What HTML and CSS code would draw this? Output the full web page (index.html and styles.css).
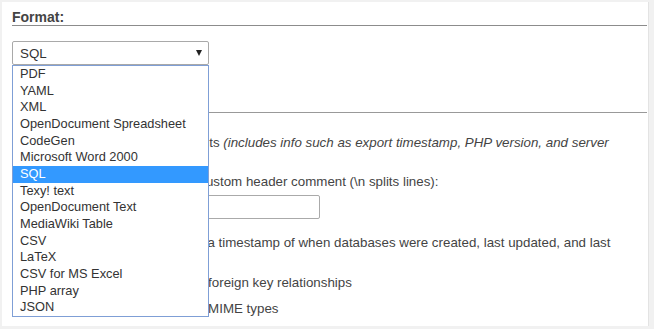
FILE: index.html
```html
<!DOCTYPE html>
<html>
<head>
<meta charset="utf-8">
<link rel="stylesheet" href="styles.css">
</head>
<body>
<div class="panel">
  <section class="format">
    <h3 class="heading">Format:</h3>
    <div class="select-wrap">
      <div class="select"><span>SQL</span><span class="arrow"></span></div>
      <ul class="dropdown">
        <li>PDF</li>
        <li>YAML</li>
        <li>XML</li>
        <li>OpenDocument Spreadsheet</li>
        <li>CodeGen</li>
        <li>Microsoft Word 2000</li>
        <li class="selected">SQL</li>
        <li>Texy! text</li>
        <li>OpenDocument Text</li>
        <li>MediaWiki Table</li>
        <li>CSV</li>
        <li>LaTeX</li>
        <li>CSV for MS Excel</li>
        <li>PHP array</li>
        <li>JSON</li>
      </ul>
    </div>
  </section>
  <section class="options">
    <h3 class="heading">Format-specific options:</h3>
    <ul class="opts">
      <li class="row row-comments"><input type="checkbox" checked> Display comments <i>(includes info such as export timestamp, PHP version, and server origin)</i>
        <ul class="sub">
          <li class="row row-header">Additional custom header comment (\n splits lines):
            <input type="text" class="text-input"></li>
          <li class="row row-stamp"><input type="checkbox"> Include a timestamp of when databases were created, last updated, and last checked</li>
          <li class="row row-fk"><input type="checkbox"> Display foreign key relationships</li>
          <li class="row row-mime"><input type="checkbox"> Display MIME types</li>
        </ul>
      </li>
    </ul>
  </section>
</div>
</body>
</html>
```
FILE: styles.css
```css
html, body {
  margin: 0;
  padding: 0;
}
body {
  background: #f1f1f1;
  font-family: "Liberation Sans", Arial, sans-serif;
  color: #444;
  font-size: 13.333px;
  overflow: hidden;
}
.panel {
  box-sizing: border-box;
  margin: 2px 6px 0 2px;
  height: 324px;
  background: #fff;
  box-shadow: 1px 0 0 #e3e3e3;
  padding: 7px 1px 0 10px;
}
.heading {
  margin: 0;
  font-size: 14px;
  line-height: 16px;
  font-weight: bold;
  color: #444;
  border-bottom: 1px solid #8c8c8c;
}
.select-wrap {
  position: relative;
  width: 197px;
  margin-top: 15px;
}
.select {
  box-sizing: border-box;
  height: 24px;
  border: 1px solid #a9a9a9;
  border-radius: 2px;
  display: flex;
  align-items: center;
  justify-content: space-between;
  padding: 0 6px 0 7px;
  color: #333;
  font-size: 13.333px;
}
.arrow {
  width: 0;
  height: 0;
  border-left: 3.5px solid transparent;
  border-right: 3.5px solid transparent;
  border-top: 6px solid #222;
}
.dropdown {
  position: absolute;
  top: 100%;
  left: 0;
  z-index: 5;
  box-sizing: border-box;
  width: 197px;
  margin: 0;
  padding: 0;
  list-style: none;
  background: #fff;
  border: 1px solid #7f9fd6;
  color: #333;
  font-size: 12.8px;
}
.dropdown li {
  height: 16.67px;
  line-height: 16.67px;
  padding-left: 7px;
  white-space: nowrap;
}
.dropdown li.selected {
  background: #3399ff;
  color: #fff;
}
.options .heading {
  margin-top: 31px;
  border-bottom-color: #999;
}
.opts, .sub {
  list-style: none;
  margin: 0;
  padding: 0;
}
.opts {
  padding-left: 75px;
  margin-top: 21px;
}
.sub {
  margin-left: 50px;
  margin-top: 5px;
}
.row {
  line-height: 17px;
}
.row input[type=checkbox] {
  width: 13px;
  height: 13px;
  margin: 0 3px 0 4px;
  vertical-align: -2px;
}
.text-input {
  display: block;
  box-sizing: border-box;
  width: 183px;
  height: 24px;
  margin: 5px 0 0;
  border: 1px solid #aaa;
  border-radius: 2px;
}
.row-stamp { margin-top: 15px; }
.row-fk { margin-top: 6px; }
.row-mime { margin-top: 9px; }
```
